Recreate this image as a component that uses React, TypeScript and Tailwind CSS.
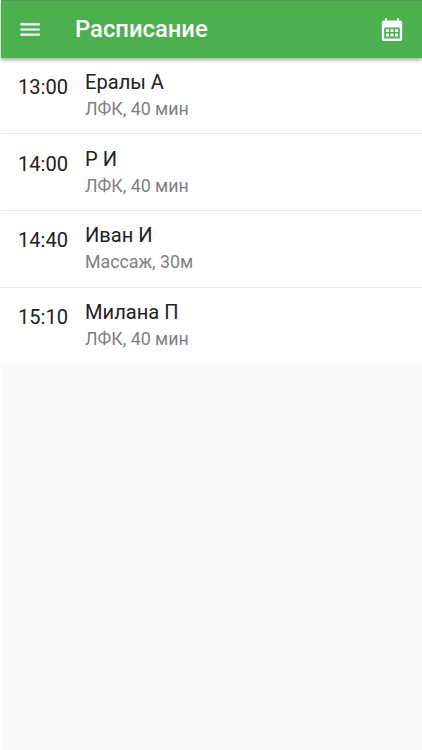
interface Appointment {
  time: string;
  name: string;
  service: string;
}

const appointments: Appointment[] = [
  { time: "13:00", name: "Ералы А", service: "ЛФК, 40 мин" },
  { time: "14:00", name: "Р И", service: "ЛФК, 40 мин" },
  { time: "14:40", name: "Иван И", service: "Массаж, 30м" },
  { time: "15:10", name: "Милана П", service: "ЛФК, 40 мин" },
];

function MenuIcon() {
  return (
    <svg viewBox="0 0 26 26" className="size-[26px]" fill="currentColor">
      <path d="M3.5 6.2h19.2v2.2H3.5zM3.5 11.4h19.2v2.2H3.5zM3.5 16.6h19.2v2.2H3.5z" />
    </svg>
  );
}

function CalendarIcon() {
  return (
    <svg viewBox="0 0 26 26" className="size-[26px]" fill="currentColor">
      <path
        fillRule="evenodd"
        d="M6 1.4h1.8v2.2h10.4V1.4H20v2.2h1a2.2 2.2 0 0 1 2.2 2.2v15.9a2.2 2.2 0 0 1-2.2 2.2H5a2.2 2.2 0 0 1-2.2-2.2V5.8A2.2 2.2 0 0 1 5 3.6h1zM5.2 10.4v11.2h15.6V10.4z"
      />
      <path d="M7 12.2h3v2.9H7zM11.5 12.2h3v2.9h-3zM16 12.2h3v2.9h-3zM7 16.6h3v2.9H7zM11.5 16.6h3v2.9h-3zM16 16.6h3v2.9h-3z" />
    </svg>
  );
}

export default function App() {
  return (
    <div className="min-h-[750px] bg-white pl-px font-['Roboto',sans-serif] text-[#212121]">
      <div className="min-h-[750px] bg-[#fafafa]">
        <header className="relative flex h-[58px] items-center border-t border-[#499f4d] bg-[#4caf50] pr-[17px] pl-4 text-white shadow-[0_2px_4px_rgba(0,0,0,0.35)]">
          <button aria-label="Меню">
            <MenuIcon />
          </button>
          <h1 className="ml-8 flex-1 text-[23.8px] font-medium">Расписание</h1>
          <button aria-label="Календарь">
            <CalendarIcon />
          </button>
        </header>

        <ul>
          {appointments.map((item) => (
            <li
              key={item.time}
              className="flex h-[76.6px] border-b border-[#e6e6e6] bg-white pl-[17px] first:h-[76.4px] last:h-[75.4px] last:border-b-0"
            >
              <span className="w-[67px] pt-[17.2px] text-[20.1px] leading-6">{item.time}</span>
              <div className="pt-[12.2px]">
                <p className="text-[20.1px] leading-6">{item.name}</p>
                <p className="mt-[3px] text-[17.8px] leading-6 text-[#7f7f7f]">{item.service}</p>
              </div>
            </li>
          ))}
        </ul>
      </div>
    </div>
  );
}
